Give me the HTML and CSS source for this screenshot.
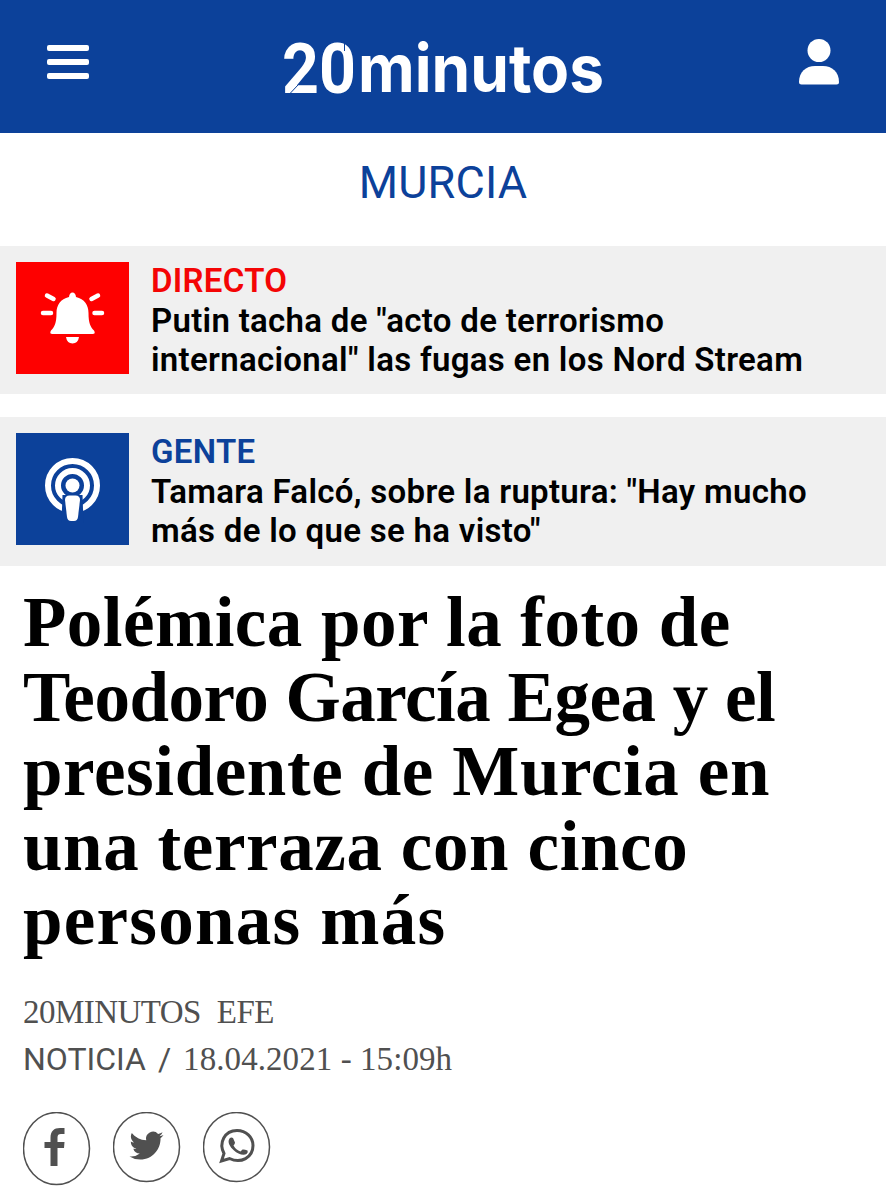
FILE: index.html
```html
<!DOCTYPE html>
<html lang="es">
<head>
    <meta charset="UTF-8">
    <meta name="viewport" content="width=device-width, initial-scale=1.0">
    <title>Polémica por la foto de Teodoro García Egea - 20minutos</title>
    <link rel="stylesheet" href="styles.css">
</head>
<body>
    <header class="header">
        <button class="menu-btn" aria-label="Menú">
            <span></span>
            <span></span>
            <span></span>
        </button>
        <svg class="logo" width="326" height="80" viewBox="0 -8 326 80">
            <text class="logo-num" x="0" y="57" textLength="74" lengthAdjust="spacingAndGlyphs">20</text>
            <text class="logo-name" x="76" y="56" textLength="246" lengthAdjust="spacingAndGlyphs">minutos</text>
            <path class="logo-cut" d="M8 57.500L16 49M62.500 6V15"/>
        </svg>
        <svg class="user" width="40" height="46" viewBox="0 0 40 46">
            <circle cx="20" cy="11.500" r="11.500"/>
            <path d="M0 43C0 33 7 27 16 27H24C33 27 40 33 40 43Q40 45.500 37.500 45.500H2.500Q0 45.500 0 43Z"/>
        </svg>
    </header>

    <div class="section"><span>MURCIA</span></div>

    <div class="banner">
        <div class="banner-icon red">
            <svg width="113" height="112" viewBox="0 0 113 112">
                <path class="fill" d="M56.500 30.500Q59.500 30.500 60 35C68.500 37 72.500 43 72.500 51C72.500 61 74.500 65 78 68.500Q80 72 76.500 72H36.500Q33 72 35 68.500C38.500 65 40.500 61 40.500 51C40.500 43 44.500 37 53 35Q53.500 30.500 56.500 30.500ZM50 75H63Q62 81.500 56.500 81.500T50 75Z"/>
                <path class="rays" d="M31 33.500L37.500 37M82 33.500L75.500 37M27 51H35M78.500 51H86"/>
            </svg>
        </div>
        <div class="banner-text">
            <h2 class="directo">DIRECTO</h2>
            <p>Putin tacha de "acto de terrorismo<br>internacional" las fugas en los Nord Stream</p>
        </div>
    </div>

    <div class="banner">
        <div class="banner-icon blue">
            <svg width="113" height="112" viewBox="0 0 113 112">
                <circle class="ring" cx="56.500" cy="52.500" r="24.500"/>
                <circle class="ring" cx="56.500" cy="52.500" r="14.500"/>
                <path class="gap" d="M46.500 62H66.500L67.500 90H45.500Z"/>
                <circle class="gap" cx="56.500" cy="52.500" r="10.500"/>
                <circle class="fill" cx="56.500" cy="52.500" r="7"/>
                <path class="fill" d="M49 67Q49 62.500 53.500 62.500H59.500Q64 62.500 64 67L62 84Q61.500 88 58 88H55Q51.500 88 51 84Z"/>
            </svg>
        </div>
        <div class="banner-text">
            <h2 class="gente">GENTE</h2>
            <p>Tamara Falcó, sobre la ruptura: "Hay mucho<br>más de lo que se ha visto"</p>
        </div>
    </div>

    <article class="article">
        <h1 class="title">
            <span class="t1">Polémica por la foto de</span><br>
            <span class="t2">Teodoro García Egea y el</span><br>
            <span class="t3">presidente de Murcia en</span><br>
            <span class="t4">una terraza con cinco</span><br>
            <span class="t5">personas más</span>
        </h1>
        <div class="author"><span>20MINUTOS</span><span>EFE</span></div>
        <div class="date"><span class="kind">NOTICIA</span><span class="slash">/</span><span class="day">18.04.2021 - 15:09h</span></div>
        <div class="social">
            <a class="facebook" aria-label="Facebook">
                <svg width="68" height="74" viewBox="0 0 68 74">
                    <ellipse cx="33.500" cy="36.500" rx="33" ry="36"/>
                    <path d="M27.500 54V36H21.500V30H27.500V26C27.500 19 31 16 37 16H41.500V22H38C35.500 22 34.500 23 34.500 25.500V30H41.500L41 36H34.500V54Z"/>
                </svg>
            </a>
            <a class="twitter" aria-label="Twitter">
                <svg width="68" height="72" viewBox="0 0 68 72">
                    <ellipse cx="33.500" cy="35" rx="33" ry="34.500"/>
                    <g transform="translate(16.500 16.500) scale(1.420 1.430)">
                        <path d="M23.950 4.570a10 10 0 0 1-2.820.770 4.960 4.960 0 0 0 2.160-2.720c-.950.560-2 .960-3.130 1.190a4.920 4.920 0 0 0-8.380 4.480C7.690 8.090 4.070 6.130 1.640 3.160a4.820 4.820 0 0 0-.670 2.480c0 1.710.870 3.210 2.190 4.100a4.900 4.900 0 0 1-2.230-.620v.060a4.920 4.920 0 0 0 3.950 4.830 5 5 0 0 1-2.210.080 4.940 4.940 0 0 0 4.600 3.420A9.870 9.870 0 0 1 0 19.540a13.990 13.990 0 0 0 7.550 2.210c9.140 0 14.300-7.720 14.300-14.370l-.020-.630a10.200 10.200 0 0 0 2.120-2.180z"/>
                    </g>
                </svg>
            </a>
            <a class="whatsapp" aria-label="WhatsApp">
                <svg width="68" height="72" viewBox="0 0 68 72">
                    <ellipse cx="33.500" cy="35" rx="33" ry="34.500"/>
                    <path class="bubble" d="M18.500 49L21 41.500C15.500 31 21.500 18.500 34 18.500C43 18.500 50 25 50 33.500C50 45.500 38 52 26.500 46.500Z"/>
                    <path d="M26.500 26.500Q28 25 30 26L32 30.500Q32 32 30.500 33.500Q33 38 37.500 39.500L39.500 37.500Q41 37 44.500 38.500Q45.500 40 43.500 42C40.500 44 34.500 42 31 38.500C27 35 24 30 26.500 26.500Z"/>
                </svg>
            </a>
        </div>
    </article>
</body>
</html>
```

FILE: styles.css
```css
* {
    box-sizing: border-box;
}
body {
    margin: 0;
    background: white;
    color: #000;
    font-family: Roboto, Arial, sans-serif;
    height: 1200px;
    overflow: hidden;
}
h1, h2, p {
    margin: 0;
}
svg {
    display: block;
}
.header {
    display: flex;
    justify-content: space-between;
    align-items: flex-start;
    height: 133px;
    padding: 28px 47px 0;
    background: #0c419a;
}
.menu-btn {
    display: flex;
    flex-direction: column;
    gap: 8px;
    width: 42px;
    margin-top: 17px;
    padding: 0;
    border: none;
    background: none;
}
.menu-btn span {
    width: 42px;
    height: 6px;
    border-radius: 2px;
    background: white;
}
.logo {
    margin-left: 2px;
    overflow: visible;
}
.logo text {
    fill: white;
    font-weight: bold;
}
.logo-num {
    font-size: 70px;
}
.logo-name {
    font-family: Inter, Roboto, sans-serif;
    font-size: 66px;
}
.logo-cut {
    stroke: #0c419a;
    stroke-width: 1;
}
.user {
    margin-top: 11px;
    fill: white;
}
.section {
    height: 113px;
    padding-top: 23px;
    text-align: center;
    font-size: 45px;
    line-height: 53px;
    letter-spacing: 0.2px;
    color: #0c419a;
}
.banner {
    display: flex;
    gap: 22px;
    height: 148px;
    padding: 16px 15px 0 16px;
    margin-bottom: 23px;
    background: #f0f0f0;
}
.banner + .banner {
    height: 149px;
    margin-bottom: 19px;
}
.banner-icon {
    width: 113px;
    height: 112px;
}
.red {
    background: #fe0000;
}
.blue {
    background: #0c419a;
}
.fill {
    fill: white;
}
.rays {
    fill: none;
    stroke: white;
    stroke-width: 4.5;
    stroke-linecap: round;
}
.ring {
    fill: none;
    stroke: white;
    stroke-width: 6;
}
.gap {
    fill: #0c419a;
}
.banner-text {
    white-space: nowrap;
    font-size: 33px;
    font-weight: 600;
    line-height: 38.5px;
    letter-spacing: 0.3px;
}
.banner-text h2 {
    margin-top: -2px;
    padding-bottom: 1px;
    font-size: 33px;
    font-weight: 600;
    line-height: 41px;
}
.directo {
    color: #f40505;
}
.gente {
    color: #0c419a;
}
.article {
    padding: 0 23px;
}
.title {
    font-family: "Liberation Serif", "Times New Roman", serif;
    font-size: 71px;
    font-weight: bold;
    line-height: 74.5px;
    white-space: nowrap;
}
.t1 {
    letter-spacing: 0.48px;
}
.t2 {
    letter-spacing: -0.48px;
}
.t3 {
    letter-spacing: 0.61px;
}
.t4 {
    letter-spacing: 0.6px;
}
.t5 {
    letter-spacing: 1.25px;
}
.author, .date {
    display: flex;
    font-family: "Liberation Serif", "Times New Roman", serif;
    font-size: 33px;
    line-height: 47px;
    color: #505050;
}
.author {
    gap: 16px;
    margin-top: 31px;
    letter-spacing: -0.55px;
}
.kind, .slash {
    font-family: Roboto, Arial, sans-serif;
    font-size: 32px;
}
.slash {
    margin: 0 12px;
}
.day {
    letter-spacing: 0.07px;
}
.social {
    display: flex;
    gap: 22px;
    margin-top: 29px;
}
.social svg {
    fill: #505050;
}
.social ellipse, .social .bubble {
    fill: none;
    stroke: #505050;
    stroke-width: 1.5;
}
.social .bubble {
    stroke-width: 3;
}
```
